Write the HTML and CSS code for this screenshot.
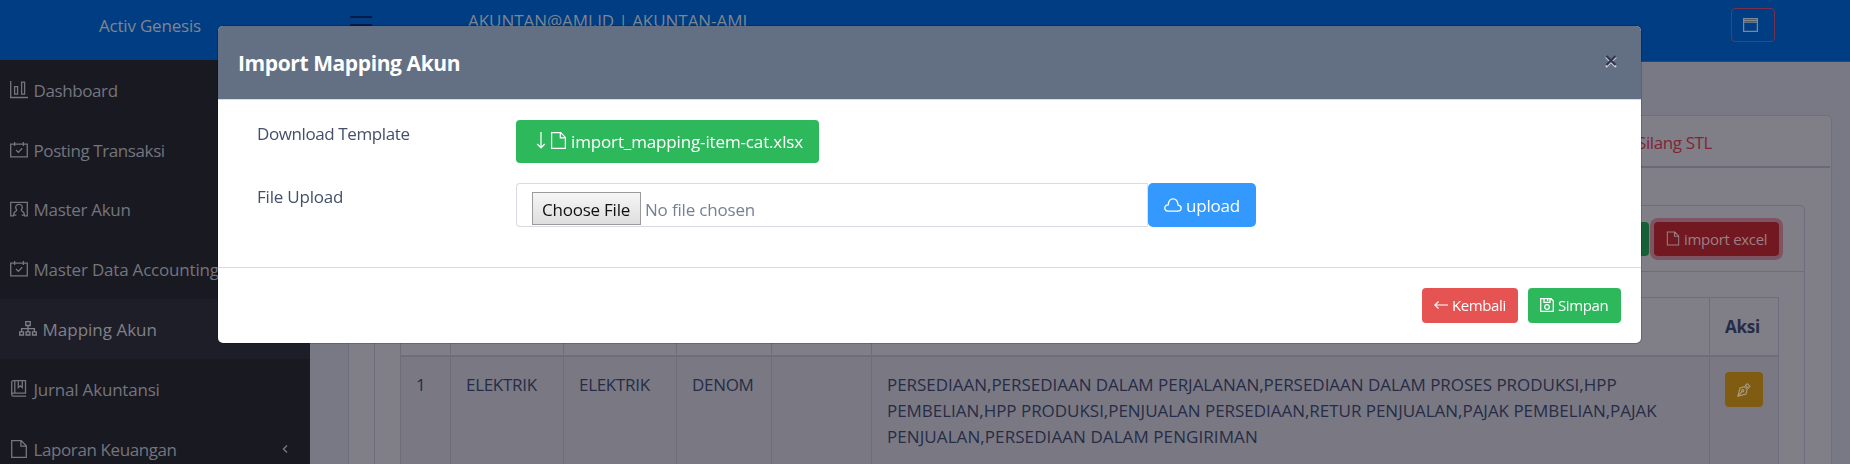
FILE: index.html
```html
<!DOCTYPE html>
<html lang="id">
<head>
<meta charset="utf-8">
<title>Activ Genesis</title>
<link rel="stylesheet" href="styles.css">
</head>
<body>
<svg class="defs" width="0" height="0">
  <symbol id="i-bars" viewBox="0 0 18 18"><path d="M.7 0v16.5H18M4.6 5.6h3v7.6h-3zM11.6 1.2h3v12h-3z"/></symbol>
  <symbol id="i-check" viewBox="0 0 18 18"><path d="M.7 3.2h16.6v12.6H.7zM4.6 1v4M13.4 1v4M6 9l2.4 2.4L12.2 7.2"/></symbol>
  <symbol id="i-user" viewBox="0 0 18 18"><path d="M4 15.8H.7V2.4h16.6v13.4H14M6.3 15.2H3.6c0-3 1.200-3.600 2.500-4.200.8-.4.6-1 .1-1.800C4.800 6.400 6.300 4.400 9 4.400s4.200 2 2.800 4.800c-.5.800-.7 1.400.1 1.800 1.300.6 2.500 1.200 2.500 4.200h-2.700"/></symbol>
  <symbol id="i-tree" viewBox="0 0 18 18"><path d="M6.800 1.700h4.400v3.800H6.800zM.7 11.800h3.800v3.200H.7zM7.100 11.800h3.800v3.200H7.100zM13.500 11.800h3.800v3.200h-3.800zM9 5.500v6.300M2.600 11.800V8.600h12.800v3.200"/></symbol>
  <symbol id="i-book" viewBox="0 0 18 18"><path d="M16.200 13.200H3.400c-1.200 0-1.700.6-1.700 1.400s.5 1.600 1.700 1.600h12.800M1.700 14.600V2.400C1.700 1.300 2.300.7 3.400.7h12.100v12.500M4.800.7v12.500M8.300.7v6.800l2-1.700 2 1.700V.7"/></symbol>
  <symbol id="i-file" viewBox="0 0 18 18"><path d="M1.700.7h9.600l5 5v11.600H1.700zM10.900.9v5.200h5.200"/></symbol>
  <symbol id="i-window" viewBox="0 0 15 14"><path d="M.6.6h13.800v12.800H.6zM.6 4.200h13.800M.6 2.400h13.800"/></symbol>
  <symbol id="i-down" viewBox="0 0 10 18"><path d="M5 0v16.500M1 12.700l4 4 4-4"/></symbol>
  <symbol id="i-left" viewBox="0 0 16 12"><path d="M1 6h15M5.200 2 1 6l4.200 4"/></symbol>
  <symbol id="i-cloud" viewBox="0 0 18 14"><path d="M4.200 13.200h9.700c4.300-.2 4.400-5.500.2-6C13.800 3 12 .8 9.100.8S4.500 3 4.200 6.800c-4.500.4-4.600 6.100 0 6.400z"/></symbol>
  <symbol id="i-save" viewBox="0 0 14 14"><path d="M.7.700h10.300l2.300 2.300v10.300H.7zM4 .7v3.600h6V.7M7.600.7v2.200"/><circle cx="7" cy="9" r="2.300"/></symbol>
  <symbol id="i-pen" viewBox="0 0 16 16"><path d="m10.300 2.800 2-2 3 3-2 2zM9 4.200l3.200 3.100-1.400 5.200L1.600 15 4 5.700zM1.800 14.700l4.400-4.800"/><circle cx="7.100" cy="8.900" r="1.300"/></symbol>
</svg>

<div class="page">
  <aside class="sidebar">
    <div class="brand">Activ Genesis</div>
    <nav class="menu">
      <a class="item"><svg><use href="#i-bars"/></svg><span class="t4">Dashboard</span></a>
      <a class="item"><svg><use href="#i-check"/></svg><span class="t4">Posting Transaksi</span></a>
      <a class="item"><svg><use href="#i-user"/></svg><span class="t3">Master Akun</span></a>
      <a class="item"><svg><use href="#i-check"/></svg><span class="t2">Master Data Accounting</span></a>
      <a class="item active"><svg><use href="#i-tree"/></svg><span>Mapping Akun</span></a>
      <a class="item"><svg><use href="#i-book"/></svg><span class="t2">Jurnal Akuntansi</span></a>
      <a class="item"><svg><use href="#i-file"/></svg><span class="t4">Laporan Keuangan</span><svg class="chevron" viewBox="0 0 6 10"><path d="M5 1.500 1.500 5 5 8.500"/></svg></a>
    </nav>
  </aside>

  <main class="main">
    <header class="navbar">
      <span class="burger"><i></i><i></i><i></i></span>
      <span class="account">AKUNTAN@AMI.ID | AKUNTAN-AMI</span>
      <a class="window-btn"><svg><use href="#i-window"/></svg></a>
    </header>

    <section class="card">
      <div class="tabs"><a class="tab">Silang STL</a></div>
      <div class="panel">
        <div class="panel-head">
          <span class="btn-export"></span>
          <span class="btn-import"><svg><use href="#i-file"/></svg>import excel</span>
        </div>
        <div class="panel-body">
          <table class="grid">
            <colgroup><col class="c1"><col class="c2"><col class="c2"><col class="c3"><col class="c4"><col><col class="c5"></colgroup>
            <thead><tr><th></th><th></th><th></th><th></th><th></th><th></th><th>Aksi</th></tr></thead>
            <tbody><tr>
              <td>1</td><td class="caps">ELEKTRIK</td><td class="caps">ELEKTRIK</td><td class="caps">DENOM</td><td></td>
              <td class="accounts">PERSEDIAAN,PERSEDIAAN DALAM PERJALANAN,PERSEDIAAN DALAM PROSES PRODUKSI,HPP<br>PEMBELIAN,HPP PRODUKSI,PENJUALAN PERSEDIAAN,RETUR PENJUALAN,PAJAK PEMBELIAN,PAJAK<br><span class="loose">PENJUALAN,PERSEDIAAN DALAM PENGIRIMAN</span></td>
              <td class="action"><span class="btn-edit"><svg><use href="#i-pen"/></svg></span></td>
            </tr></tbody>
          </table>
        </div>
      </div>
    </section>
  </main>
</div>

<div class="modal">
  <div class="modal-head">
    <h5>Import Mapping Akun</h5>
    <svg class="close" viewBox="0 0 14 16"><path class="shade" d="m2 4 10 10M12 4 2 14"/><path d="m2.500 3 9 9M11.500 3l-9 9"/></svg>
  </div>
  <div class="modal-body">
    <div class="row first">
      <label class="t4">Download Template</label>
      <a class="btn-template"><svg class="down"><use href="#i-down"/></svg><svg><use href="#i-file"/></svg><span>import_mapping-item-cat.xlsx</span></a>
    </div>
    <div class="row">
      <label class="t2">File Upload</label>
      <div class="file"><span class="choose">Choose File</span><span class="none">No file chosen</span></div>
      <a class="btn-upload"><svg><use href="#i-cloud"/></svg><span>upload</span></a>
    </div>
  </div>
  <div class="modal-foot">
    <a class="btn-sm red"><svg><use href="#i-left"/></svg>Kembali</a>
    <a class="btn-sm green"><svg><use href="#i-save"/></svg>Simpan</a>
  </div>
</div>
</body>
</html>
```
FILE: styles.css
```css
* { box-sizing: border-box; }
body {
  margin: 0;
  height: 464px;
  overflow: hidden;
  font: 17px/26px "Open Sans", sans-serif;
  color: #262c47;
  background: #797885;
}
.defs { position: absolute; }
svg { fill: none; stroke: currentColor; stroke-width: 1.3; flex: none; display: block; }
.page { display: flex; height: 464px; overflow: hidden; }

.sidebar { width: 310px; flex: none; background: #191922; color: #74757d; }
.brand {
  height: 60px;
  padding: 13px 0 0 99px;
  background: #003d82;
  color: #80868f;
  letter-spacing: -.2px;
}
.item { display: flex; align-items: center; height: 59.8px; padding: 0 22px 0 10px; white-space: nowrap; }
.item svg { width: 18px; height: 18px; margin: 0 5.500px 0 0; }
.item span { padding-top: 2px; }
.item.active { padding-left: 19px; background: #1e1e28; color: #808188; }
.item .chevron { width: 6px; height: 10px; margin: 0 0 0 auto; stroke-width: 1.500; }
.t2 { letter-spacing: -.2px; }
.t3 { letter-spacing: -.3px; }
.t4 { letter-spacing: -.4px; }

.main { flex: 1; min-width: 0; }
.navbar {
  display: flex;
  align-items: flex-start;
  height: 62px;
  padding: 8px 75px 0 40px;
  background: #003d82;
  border-bottom: 1px solid #25477b;
}
.burger { display: grid; gap: 6px; width: 22px; margin: 8px 96px 0 0; }
.burger i { height: 2px; background: #06194b; }
.account { color: #7e8590; letter-spacing: -.05px; }
.window-btn {
  display: flex;
  width: 44px;
  height: 34px;
  margin-left: auto;
  padding: 9px 0 0 11px;
  border: 1px solid #77304d;
  border-radius: 4px;
  color: #808791;
}
.window-btn svg { width: 15px; height: 14px; }

.card {
  width: 1484px;
  height: 420px;
  margin: 53px 0 0 38px;
  border: 1px solid #706f7d;
  border-radius: 5px;
  background: #807f88;
}
.tabs { display: flex; justify-content: flex-end; height: 52px; margin-right: 1px; padding: 14px 118px 0 0; border-bottom: 2px solid #6a6978; }
.tab { color: #802536; letter-spacing: -.4px; }
.panel { margin: 37px 26px 0 25px; height: 330px; border: 1px solid #6e6d7b; border-radius: 5px; }
.panel-head { display: flex; justify-content: flex-end; gap: 5px; height: 66px; padding: 16px 25px 0 0; border-bottom: 1px solid #6e6d7b; }
.btn-export { width: 90px; height: 34px; border-radius: 4px; background: #175f37; }
.btn-import {
  display: flex;
  align-items: center;
  width: 125px;
  height: 34px;
  padding: 0 0 0 12px;
  border-radius: 4px;
  box-shadow: 0 0 0 4px #7f5462;
  background: #721821;
  color: #9a8085;
  font-size: 15px;
  letter-spacing: -.3px;
}
.btn-import svg { width: 14px; height: 15px; margin: -2px 4px 0 0; }
.panel-body { padding: 25px 0 0 25px; }

.grid { width: 1379px; table-layout: fixed; border-collapse: collapse; }
.c1 { width: 50px; } .c2 { width: 113px; } .c3 { width: 95px; } .c4 { width: 100px; } .c5 { width: 69px; }
.grid th, .grid td { border: 1px solid #6e6d7b; padding: 15px 15px; text-align: left; vertical-align: top; white-space: nowrap; }
.grid th { height: 57px; padding-top: 16px; border-bottom-width: 2px; font-weight: 700; letter-spacing: -.2px; }
.grid td { background: #7a7983; }
.grid .caps { letter-spacing: -.3px; }
.grid .accounts { letter-spacing: -.03px; }
.loose { letter-spacing: .08px; }
.btn-edit { display: flex; width: 38px; height: 35px; padding: 11px; border-radius: 4px; background: #805b12; color: #a79a80; }
.btn-edit svg { width: 15px; height: 14px; }

.modal {
  position: fixed;
  left: 218px;
  top: 26px;
  width: 1423px;
  height: 317px;
  border-radius: 5px;
  background: #fff;
  box-shadow: 0 0 0 1px rgba(0, 0, 0, .18);
  color: #44506a;
  overflow: hidden;
}
.modal-head { display: flex; justify-content: space-between; height: 74px; padding: 24px 23px 0 20px; border-bottom: 1px solid #d8dbe2; background: #636f83; color: #fff; }
h5 { margin: 0; font-size: 21px; line-height: 26px; font-weight: 700; letter-spacing: -.4px; }
.close { width: 14px; height: 16px; margin-top: 3px; color: #30364c; stroke-width: 2.200; }
.close .shade { stroke: #c9ced6; }
.modal-body { height: 167px; padding: 20px 0 0 39px; }
.row { display: flex; align-items: flex-start; }
.row.first { height: 63px; }
.row label { width: 259px; padding-top: 1px; }
.btn-template { display: flex; align-items: center; width: 303px; height: 43px; padding: 0 0 1px 20px; border-radius: 4px; background: #2eb85c; color: #fff; letter-spacing: -.14px; }
.btn-template svg { width: 17px; height: 17px; margin: -2px 4px 0 0; }
.btn-template svg.down { width: 10px; margin-right: 4px; }
.btn-template span, .btn-upload span { padding-top: 2px; }
.row .file { display: flex; width: 632px; height: 44px; padding: 8px 0 0 15px; border: 1px solid #d8dbe0; border-right-color: #e0e2e8; border-radius: 4px 0 0 4px; color: #768192; }
.choose { width: 109px; height: 33px; padding: 4px 0 0 9px; border: 1px solid #9b9b9b; background: linear-gradient(#f6f6f6, #dedede); color: #111; letter-spacing: -.23px; }
.none { padding: 5px 0 0 4px; letter-spacing: -.18px; }
.btn-upload { display: flex; align-items: center; width: 108px; height: 44px; padding-left: 16px; border-radius: 5px; background: #3399ff; color: #fff; letter-spacing: -.2px; }
.btn-upload svg { width: 18px; height: 14px; margin: -1px 4px 0 0; }
.modal-foot { display: flex; justify-content: flex-end; gap: 10px; padding: 20px 20px 0 0; border-top: 1px solid #d8dbe0; }
.btn-sm { display: flex; align-items: center; height: 35px; padding: 0 0 1px 12px; border-radius: 4px; color: #fff; font-size: 15px; letter-spacing: -.4px; }
.btn-sm svg { width: 14px; height: 14px; margin-right: 4px; }
.red { width: 96px; background: #e55353; }
.green { width: 93px; background: #2eb85c; }
```
